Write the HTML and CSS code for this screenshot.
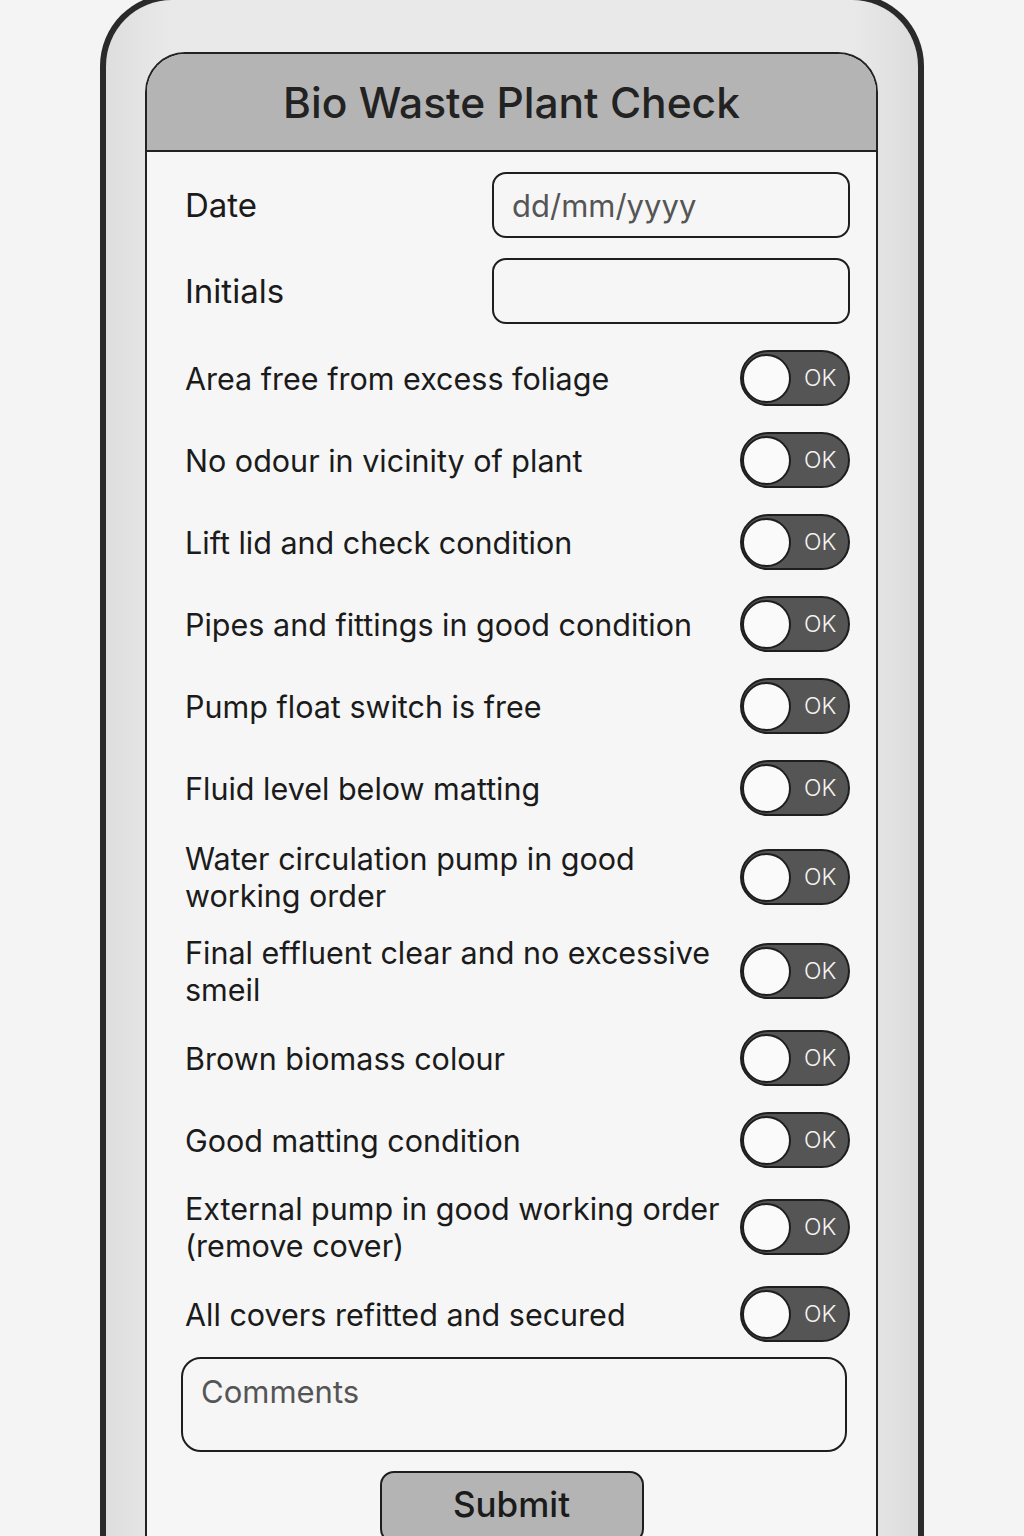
FILE: index.html
```html
<!DOCTYPE html>
<html>
<head>
<meta charset="utf-8">
<link rel="stylesheet" href="styles.css">
</head>
<body>
<div class="phone">
  <div class="card">
    <div class="header"><h1>Bio Waste Plant Check</h1></div>
    <div class="body">
      <div class="field">
        <span class="label">Date</span>
        <div class="input"><span class="ph">dd/mm/yyyy</span></div>
      </div>
      <div class="field">
        <span class="label">Initials</span>
        <div class="input"></div>
      </div>
      <div class="rows">
        <div class="row"><span class="text">Area free from excess foliage</span><span class="toggle"><span class="knob"></span><span class="ok">OK</span></span></div>
        <div class="row"><span class="text">No odour in vicinity of plant</span><span class="toggle"><span class="knob"></span><span class="ok">OK</span></span></div>
        <div class="row"><span class="text">Lift lid and check condition</span><span class="toggle"><span class="knob"></span><span class="ok">OK</span></span></div>
        <div class="row"><span class="text">Pipes and fittings in good condition</span><span class="toggle"><span class="knob"></span><span class="ok">OK</span></span></div>
        <div class="row"><span class="text">Pump float switch is free</span><span class="toggle"><span class="knob"></span><span class="ok">OK</span></span></div>
        <div class="row"><span class="text">Fluid level below matting</span><span class="toggle"><span class="knob"></span><span class="ok">OK</span></span></div>
        <div class="row tall first"><span class="text">Water circulation pump in good<br>working order</span><span class="toggle"><span class="knob"></span><span class="ok">OK</span></span></div>
        <div class="row tall"><span class="text">Final effluent clear and no excessive<br>smeil</span><span class="toggle"><span class="knob"></span><span class="ok">OK</span></span></div>
        <div class="row"><span class="text">Brown biomass colour</span><span class="toggle"><span class="knob"></span><span class="ok">OK</span></span></div>
        <div class="row"><span class="text">Good matting condition</span><span class="toggle"><span class="knob"></span><span class="ok">OK</span></span></div>
        <div class="row tall"><span class="text">External pump in good working order<br>(remove cover)</span><span class="toggle"><span class="knob"></span><span class="ok">OK</span></span></div>
        <div class="row"><span class="text">All covers refitted and secured</span><span class="toggle"><span class="knob"></span><span class="ok">OK</span></span></div>
      </div>
      <div class="comments"><span class="ph">Comments</span></div>
      <div class="actions"><button class="submit">Submit</button></div>
    </div>
  </div>
</div>
</body>
</html>
```

FILE: styles.css
```css
html, body {
  margin: 0;
  padding: 0;
}
body {
  background: #f4f4f4;
  height: 1536px;
  overflow: hidden;
  font-family: "Inter", "Noto Sans", sans-serif;
  color: #1b1b1b;
}
.phone {
  margin: -6px 0 0 100px;
  width: 824px;
  height: 1562px;
  box-sizing: border-box;
  border: 6px solid #2a2a2a;
  border-bottom: none;
  border-radius: 72px 72px 0 0;
  background: linear-gradient(90deg, #dedede 0%, #e9e9e9 8%, #e9e9e9 92%, #dcdcdc 100%);
  padding: 52px 40px 0 39px;
  overflow: hidden;
}
.card {
  border: 2px solid #222;
  border-bottom: none;
  border-radius: 40px 40px 0 0;
  background: #f6f6f6;
  height: 1520px;
  overflow: hidden;
}
.header {
  height: 96px;
  background: #b4b4b4;
  border-bottom: 2px solid #222;
  display: flex;
  align-items: center;
  justify-content: center;
}
.header h1 {
  margin: 0;
  font-size: 42.5px;
  font-weight: 500;
  color: #222;
}
.body {
  padding: 20px 26px 0 38px;
}
.field {
  display: flex;
  align-items: center;
  justify-content: space-between;
  height: 66px;
  margin-bottom: 20px;
}
.field:nth-child(2) {
  margin-bottom: 13px;
}
.label {
  font-size: 33px;
  font-weight: 400;
}
.input {
  width: 358px;
  height: 66px;
  border: 2.5px solid #1e1e1e;
  border-radius: 14px;
  box-sizing: border-box;
  display: flex;
  align-items: center;
  padding-left: 18px;
  background: #f6f6f6;
}
.ph {
  color: #555;
  font-size: 31px;
}
.rows {
  display: flex;
  flex-direction: column;
}
.row {
  height: 82px;
  display: flex;
  align-items: center;
  justify-content: space-between;
}
.row.tall {
  height: 92px;
}
.row.tall.first {
  height: 96px;
}
.text {
  font-size: 30.5px;
  line-height: 37px;
  color: #1b1b1b;
}
.toggle {
  width: 110px;
  height: 56px;
  box-sizing: border-box;
  border: 2.5px solid #1e1e1e;
  border-radius: 28px;
  background: #555;
  display: flex;
  align-items: center;
  flex-shrink: 0;
}
.knob {
  width: 49px;
  height: 49px;
  border-radius: 50%;
  background: #fafafa;
  border: 2px solid #1e1e1e;
  box-sizing: border-box;
  margin-left: 0;
}
.ok {
  color: #f4f4f4;
  font-size: 23px;
  font-weight: 300;
  margin-left: 13px;
}
.comments {
  margin: 2px 0 0 -4px;
  width: 666px;
  height: 95px;
  box-sizing: border-box;
  border: 2.5px solid #1e1e1e;
  border-radius: 20px;
  padding: 14px 0 0 18px;
  background: #f6f6f6;
}
.actions {
  display: flex;
  justify-content: center;
  margin-top: 19px;
  padding-right: 12px;
}
.submit {
  width: 264px;
  height: 72px;
  background: #b4b4b4;
  border: 2.5px solid #1e1e1e;
  border-radius: 14px;
  font-family: "Inter", "Noto Sans", sans-serif;
  font-size: 35px;
  font-weight: 500;
  color: #1b1b1b;
  padding: 0 0 6px 0;
}
```
